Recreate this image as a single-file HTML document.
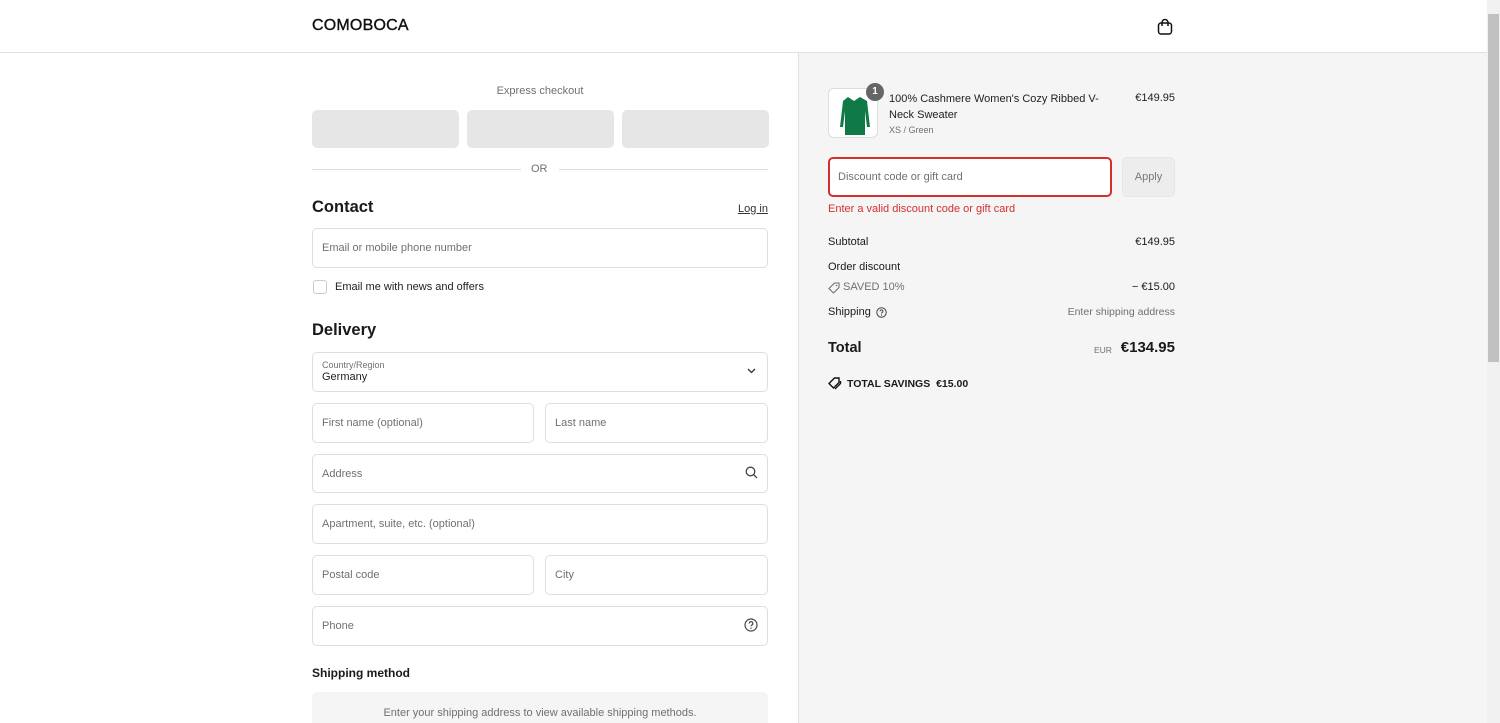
<!DOCTYPE html>
<html><head><meta charset="utf-8"><style>
*{box-sizing:border-box;margin:0;padding:0}
html,body{width:1500px;height:723px;overflow:hidden}
body{font-family:"Liberation Sans",sans-serif;color:#1a1a1a;background:#fff;position:relative}
.a{position:absolute}
.r{position:absolute;right:325px;text-align:right;white-space:nowrap}
.hdr{left:0;top:0;width:1487px;height:53px;border-bottom:1px solid #e1e1e1;background:#fff}
.right{left:798px;top:53px;width:689px;height:670px;background:#f5f5f5;border-left:1px solid #e1e1e1}
.inp{position:absolute;border:1px solid #dedede;border-radius:5px;background:#fff;font-size:11px;color:#707070;padding-left:9px;display:flex;align-items:center}
.ex{position:absolute;top:110px;height:38px;width:147px;background:#e6e6e6;border-radius:5px}
.t12{font-size:11px;white-space:nowrap}
.sb{left:1487px;top:0;width:13px;height:723px;background:#f1f1f1}
</style></head><body>
<div class="a hdr"></div>
<div class="a" style="left:312px;top:17px;font-size:16px;letter-spacing:.2px;color:#111;-webkit-text-stroke:.4px #111">COMOBOCA</div>
<svg class="a" style="left:1157px;top:18px" width="16" height="17" viewBox="0 0 16 17"><rect x="1.5" y="5" width="13" height="11" rx="2.5" fill="none" stroke="#111" stroke-width="1.5"/><path d="M5 8V4.5a3 3 0 0 1 6 0V8" fill="none" stroke="#111" stroke-width="1.5"/></svg>
<div class="a sb"><div class="a" style="left:1px;top:14px;width:11px;height:348px;background:#c1c1c1"></div></div>
<div class="a right"></div>

<div class="a t12" style="left:312px;width:456px;top:85px;text-align:center;color:#707070">Express checkout</div>
<div class="ex" style="left:312px"></div><div class="ex" style="left:467px"></div><div class="ex" style="left:622px"></div>
<div class="a" style="left:312px;top:169px;width:209px;border-top:1px solid #dedede"></div>
<div class="a" style="left:559px;top:169px;width:209px;border-top:1px solid #dedede"></div>
<div class="a t12" style="left:531px;top:163px;color:#707070">OR</div>

<div class="a" style="left:312px;top:198px;font-size:16.5px;font-weight:bold">Contact</div>
<div class="a t12" style="left:738px;top:203px;text-decoration:underline;color:#333">Log in</div>
<div class="inp" style="left:312px;top:228px;width:456px;height:40px">Email or mobile phone number</div>
<div class="a" style="left:313px;top:280px;width:14px;height:14px;border:1px solid #ccc;border-radius:3px;background:#fff"></div>
<div class="a t12" style="left:335px;top:281px;color:#222">Email me with news and offers</div>

<div class="a" style="left:312px;top:321px;font-size:16.5px;font-weight:bold">Delivery</div>
<div class="inp" style="left:312px;top:352px;width:456px;height:40px;display:block;padding-top:7px">
<div style="font-size:9px;color:#707070">Country/Region</div><div style="font-size:11px;color:#222;margin-top:1px">Germany</div></div>
<svg class="a" style="left:747px;top:368px" width="9" height="6" viewBox="0 0 9 6"><path d="M1 1l3.5 3.5L8 1" fill="none" stroke="#333" stroke-width="1.3"/></svg>
<div class="inp" style="left:312px;top:403px;width:222px;height:40px">First name (optional)</div>
<div class="inp" style="left:545px;top:403px;width:223px;height:40px">Last name</div>
<div class="inp" style="left:312px;top:454px;width:456px;height:39px">Address</div>
<svg class="a" style="left:745px;top:466px" width="13" height="13" viewBox="0 0 13 13"><circle cx="5.5" cy="5.5" r="4.3" fill="none" stroke="#444" stroke-width="1.3"/><path d="M8.7 8.7L12 12" stroke="#444" stroke-width="1.3"/></svg>
<div class="inp" style="left:312px;top:504px;width:456px;height:40px">Apartment, suite, etc. (optional)</div>
<div class="inp" style="left:312px;top:555px;width:222px;height:40px">Postal code</div>
<div class="inp" style="left:545px;top:555px;width:223px;height:40px">City</div>
<div class="inp" style="left:312px;top:606px;width:456px;height:40px">Phone</div>
<svg class="a" style="left:744px;top:618px" width="14" height="14" viewBox="0 0 14 14"><circle cx="7" cy="7" r="6" fill="none" stroke="#444" stroke-width="1.2"/><path d="M5.2 5.5a1.8 1.8 0 1 1 2.5 1.6c-.5.3-.7.6-.7 1.2" fill="none" stroke="#444" stroke-width="1.2"/><circle cx="7" cy="10.2" r=".7" fill="#444"/></svg>
<div class="a" style="left:312px;top:666px;font-size:12px;font-weight:bold">Shipping method</div>
<div class="a" style="left:312px;top:692px;width:456px;height:40px;background:#f5f5f5;border-radius:5px;text-align:center;padding-top:15px;font-size:11px;color:#707070">Enter your shipping address to view available shipping methods.</div>

<!-- right -->
<div class="a" style="left:828px;top:88px;width:50px;height:50px;border:1px solid #ddd;border-radius:6px;background:#fff;overflow:hidden">
<svg width="50" height="50" viewBox="0 0 50 50"><path d="M19 8l6 4 6-4 7 4 3 26h-3l-2-16v24H16V22l-2 16h-3l3-26z" fill="#0f7a45"/></svg></div>
<div class="a" style="left:866px;top:83px;width:18px;height:18px;border-radius:9px;background:#666;color:#fff;font-size:10px;font-weight:bold;text-align:center;line-height:18px">1</div>
<div class="a" style="left:889px;top:91px;width:215px;line-height:16px;color:#222;font-size:11px">100% Cashmere Women's Cozy Ribbed V-Neck Sweater</div>
<div class="a" style="left:889px;top:125px;font-size:9px;color:#707070">XS / Green</div>
<div class="r t12" style="top:92px;color:#222">€149.95</div>

<div class="inp" style="left:828px;top:157px;width:284px;height:40px;border:2px solid #d32f2f;padding-left:8px">Discount code or gift card</div>
<div class="a" style="left:1122px;top:157px;width:53px;height:40px;border:1px solid #e6e6e6;border-radius:5px;background:#ededed;color:#777;font-size:11px;text-align:center;line-height:38px">Apply</div>
<div class="a t12" style="left:828px;top:203px;color:#d32f2f">Enter a valid discount code or gift card</div>

<div class="a t12" style="left:828px;top:236px">Subtotal</div>
<div class="r t12" style="top:236px">€149.95</div>
<div class="a t12" style="left:828px;top:261px">Order discount</div>
<svg class="a" style="left:828px;top:282px" width="12" height="12" viewBox="0 0 12 12"><path d="M6.5 1H11v4.5L5.5 11 1 6.5z" fill="none" stroke="#707070" stroke-width="1.1"/><circle cx="8.5" cy="3.5" r=".8" fill="#707070"/></svg>
<div class="a t12" style="left:843px;top:281px;color:#707070">SAVED 10%</div>
<div class="r t12" style="top:281px">− €15.00</div>
<div class="a t12" style="left:828px;top:306px">Shipping</div>
<svg class="a" style="left:876px;top:307px" width="11" height="11" viewBox="0 0 14 14"><circle cx="7" cy="7" r="6" fill="none" stroke="#444" stroke-width="1.3"/><path d="M5.2 5.5a1.8 1.8 0 1 1 2.5 1.6c-.5.3-.7.6-.7 1.2" fill="none" stroke="#444" stroke-width="1.3"/><circle cx="7" cy="10.2" r=".8" fill="#444"/></svg>
<div class="r t12" style="top:306px;color:#707070;font-size:10.5px">Enter shipping address</div>
<div class="a" style="left:828px;top:340px;font-size:14.5px;font-weight:bold">Total</div>
<div class="a" style="left:1094px;top:345px;font-size:8.5px;color:#707070">EUR</div>
<div class="r" style="top:339px;font-size:15px;font-weight:bold">€134.95</div>
<svg class="a" style="left:828px;top:377px" width="14" height="13" viewBox="0 0 14 13"><path d="M6.5 1H11v4.5L5.5 11 1 6.5z" fill="none" stroke="#111" stroke-width="1.4"/><path d="M12.5 4v2.5L7 12" fill="none" stroke="#111" stroke-width="1.4"/></svg>
<div class="a" style="left:847px;top:378px;font-size:10.5px;font-weight:bold;white-space:nowrap">TOTAL SAVINGS&nbsp; €15.00</div>
</body></html>
